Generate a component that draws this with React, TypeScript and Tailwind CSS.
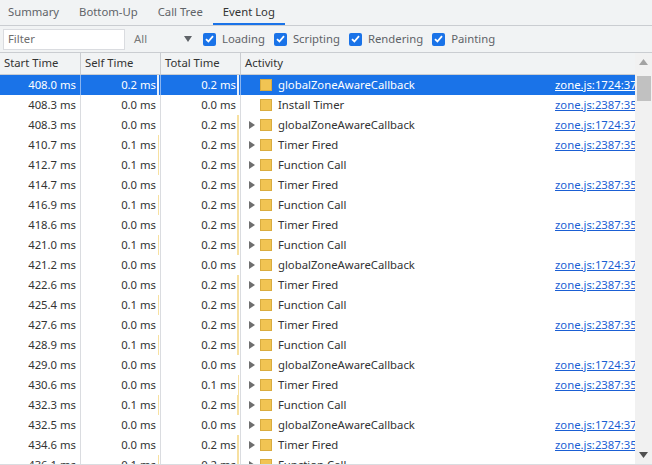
type Row = {
  start: string;
  self: number;
  total: number;
  name: string;
  link?: string;
  expand: boolean;
};

const GZ = "globalZoneAwareCallback";
const L1 = "zone.js:1724:37";
const L2 = "zone.js:2387:35";

const rows: Row[] = [
  { start: "408.0", self: 0.2, total: 0.2, name: GZ, link: L1, expand: false },
  { start: "408.3", self: 0.0, total: 0.0, name: "Install Timer", link: L2, expand: false },
  { start: "408.3", self: 0.0, total: 0.2, name: GZ, link: L1, expand: true },
  { start: "410.7", self: 0.1, total: 0.2, name: "Timer Fired", link: L2, expand: true },
  { start: "412.7", self: 0.1, total: 0.2, name: "Function Call", expand: true },
  { start: "414.7", self: 0.0, total: 0.2, name: "Timer Fired", link: L2, expand: true },
  { start: "416.9", self: 0.1, total: 0.2, name: "Function Call", expand: true },
  { start: "418.6", self: 0.0, total: 0.2, name: "Timer Fired", link: L2, expand: true },
  { start: "421.0", self: 0.1, total: 0.2, name: "Function Call", expand: true },
  { start: "421.2", self: 0.0, total: 0.0, name: GZ, link: L1, expand: true },
  { start: "422.6", self: 0.0, total: 0.2, name: "Timer Fired", link: L2, expand: true },
  { start: "425.4", self: 0.1, total: 0.2, name: "Function Call", expand: true },
  { start: "427.6", self: 0.0, total: 0.2, name: "Timer Fired", link: L2, expand: true },
  { start: "428.9", self: 0.1, total: 0.2, name: "Function Call", expand: true },
  { start: "429.0", self: 0.0, total: 0.0, name: GZ, link: L1, expand: true },
  { start: "430.6", self: 0.0, total: 0.1, name: "Timer Fired", link: L2, expand: true },
  { start: "432.3", self: 0.1, total: 0.2, name: "Function Call", expand: true },
  { start: "432.5", self: 0.0, total: 0.0, name: GZ, link: L1, expand: true },
  { start: "434.6", self: 0.0, total: 0.2, name: "Timer Fired", link: L2, expand: true },
  { start: "436.1", self: 0.1, total: 0.2, name: "Function Call", expand: true },
];

const tabs = ["Summary", "Bottom-Up", "Call Tree", "Event Log"];

function Checkbox({ label }: { label: string }) {
  return (
    <label className="flex items-center gap-[6px] mr-[9px]">
      <span className="w-[13px] h-[13px] rounded-[2px] bg-[#1a73e8] flex items-center justify-center">
        <svg width="9" height="8" viewBox="0 0 9 8">
          <path d="M1 4.2 L3.4 6.5 L8 1.2" stroke="white" strokeWidth="1.8" fill="none" />
        </svg>
      </span>
      <span className="text-[#5f6368]">{label}</span>
    </label>
  );
}

// tiny duration bar at the right edge of a time cell
function Bar({ value, selected }: { value: number; selected: boolean }) {
  if (value <= 0) return null;
  return (
    <span
      className={`absolute right-[1px] top-0 bottom-0 ${value >= 0.2 ? "w-[2px]" : "w-[1px]"} ${
        selected ? "bg-[#e8f0fd]" : "bg-[#f7e0a0]"
      }`}
    />
  );
}

export default function App() {
  return (
    <div
      className="w-[652px] h-[465px] overflow-hidden flex flex-col bg-white text-[11.3px] text-[#333]"
      style={{ fontFamily: '"Noto Sans", "Segoe UI", sans-serif' }}
    >
      {/* Tabs */}
      <div className="h-[26px] shrink-0 bg-[#f1f3f4] border-b border-[#cacdd1] flex">
        <div className="flex -ml-[2px]">
          {tabs.map((t) => (
            <div
              key={t}
              className={`px-[10px] h-full flex items-center pt-[1px] border-b-2 ${
                t === "Event Log" ? "border-[#1a73e8] text-[#333]" : "border-transparent text-[#5f6368]"
              }`}
            >
              {t}
            </div>
          ))}
        </div>
      </div>

      {/* Toolbar */}
      <div className="h-[27px] shrink-0 bg-[#f1f3f4] border-b border-[#cacdd1] flex items-center pl-[3px]">
        <div className="w-[122px] h-[21px] bg-white border border-[#dadce0] flex items-center pl-[4px] text-[#6e6e6e]">
          Filter
        </div>
        <div className="w-[72px] flex items-center pl-[9px] text-[#777]">
          <span className="flex-1">All</span>
          <svg width="8" height="6" viewBox="0 0 8 6" className="mr-[5px]">
            <path d="M0 0 H8 L4 6 Z" fill="#5f6368" />
          </svg>
        </div>
        <div className="flex items-center ml-[6px]">
          <Checkbox label="Loading" />
          <Checkbox label="Scripting" />
          <Checkbox label="Rendering" />
          <Checkbox label="Painting" />
        </div>
      </div>

      {/* Table */}
      <div className="flex-1 min-h-0 flex border-b border-[#dadce0]">
        <div className="flex-1 min-w-0 flex flex-col overflow-hidden">
          <div className="h-[22px] shrink-0 flex bg-[#f1f3f4] border-b border-[#cacdd1]">
            <div className="w-[81px] border-r border-[#cacdd1] pl-[4px] flex items-center">Start Time</div>
            <div className="w-[80px] border-r border-[#cacdd1] pl-[4px] flex items-center">Self Time</div>
            <div className="w-[80px] border-r border-[#cacdd1] pl-[4px] flex items-center">Total Time</div>
            <div className="flex-1 pl-[4px] flex items-center">Activity</div>
          </div>
          {rows.map((r, i) => {
            const sel = i === 0;
            const sep = sel ? "border-[#8ab4f0]" : "border-[#dadce0]";
            return (
              <div
                key={i}
                className={`h-[20px] shrink-0 flex ${sel ? "bg-[#1a73e8] text-white" : "text-[#333]"}`}
              >
                <div className={`w-[81px] border-r ${sep} pr-[4px] pt-[1px] flex items-center justify-end`}>
                  {r.start} ms
                </div>
                <div className={`relative w-[80px] border-r ${sep} pr-[4px] pt-[1px] flex items-center justify-end`}>
                  {r.self.toFixed(1)} ms
                  <Bar value={r.self} selected={sel} />
                </div>
                <div className={`relative w-[80px] border-r ${sep} pr-[4px] pt-[1px] flex items-center justify-end`}>
                  {r.total.toFixed(1)} ms
                  <Bar value={r.total} selected={sel} />
                </div>
                <div className="flex-1 min-w-0 flex items-center">
                  <span className="w-[19px] shrink-0 flex justify-end pr-[5px]">
                    {r.expand && (
                      <svg width="6" height="8" viewBox="0 0 6 8">
                        <path d="M0 0 L6 4 L0 8 Z" fill="#6e6e6e" />
                      </svg>
                    )}
                  </span>
                  <span className="w-[12px] h-[12px] shrink-0 bg-[#f1c453] border border-[#d9ac3f]" />
                  <span className="flex-1 min-w-0 pl-[6px] pt-[1px] whitespace-nowrap overflow-hidden">{r.name}</span>
                  <span className="w-[80px] shrink-0 pt-[1px] whitespace-nowrap overflow-hidden">
                    {r.link && (
                      <span className={`underline ${sel ? "text-white" : "text-[#1a5fd4]"}`}>{r.link}</span>
                    )}
                  </span>
                </div>
              </div>
            );
          })}
        </div>

        {/* Scrollbar */}
        <div className="w-[17px] shrink-0 bg-[#f1f1f1] flex flex-col items-center">
          <svg width="9" height="6" viewBox="0 0 9 6" className="mt-[6px]">
            <path d="M0 6 L4.5 0 L9 6 Z" fill="#a3a3a3" />
          </svg>
          <div className="w-[14px] h-[25px] bg-[#c1c1c1] mt-[11px]" />
          <div className="flex-1" />
          <svg width="9" height="6" viewBox="0 0 9 6" className="mb-[6px]">
            <path d="M0 0 L9 0 L4.5 6 Z" fill="#505050" />
          </svg>
        </div>
      </div>
    </div>
  );
}
